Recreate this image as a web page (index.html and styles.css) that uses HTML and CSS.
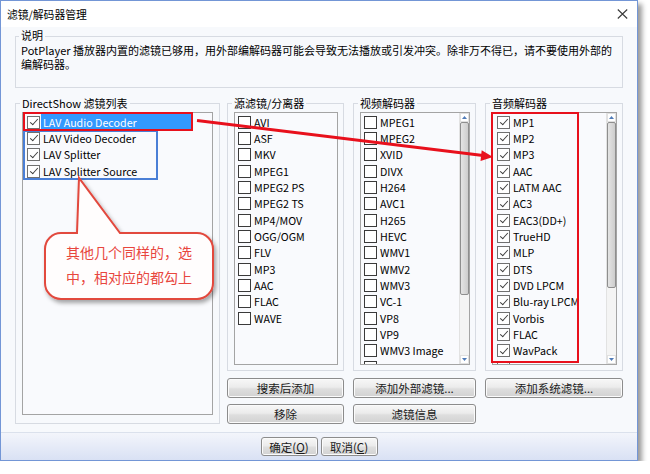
FILE: index.html
```html
<!DOCTYPE html>
<html lang="zh-CN">
<head>
<meta charset="utf-8">
<title>滤镜/解码器管理</title>
<link rel="stylesheet" href="styles.css">
</head>
<body>
<div class="window">
  <div class="titlebar">
    <span class="title">滤镜/解码器管理</span>
    <svg class="close" width="11" height="10" viewBox="0 0 11 10"><path d="M0.8 0.5 L10.2 9.5 M10.2 0.5 L0.8 9.5" stroke="#3a3a3a" stroke-width="1.1" fill="none"/></svg>
  </div>
  <div class="body">
    <div class="group desc">
      <div class="group-label">说明</div>
      <p class="desc-text">PotPlayer 播放器内置的滤镜已够用，用外部编解码器可能会导致无法播放或引发冲突。除非万不得已，请不要使用外部的<br>编解码器。</p>
    </div>
    <div class="main">
      <div class="group ds">
        <div class="group-label">DirectShow 滤镜列表</div>
        <div class="list">
          <div class="items">
            <div class="row"><span class="cb on"></span><span class="label sel">LAV Audio Decoder</span></div>
            <div class="row"><span class="cb on"></span><span class="label">LAV Video Decoder</span></div>
            <div class="row"><span class="cb on"></span><span class="label">LAV Splitter</span></div>
            <div class="row"><span class="cb on"></span><span class="label">LAV Splitter Source</span></div>
          </div>
        </div>
      </div>
      <div class="right">
        <div class="group col">
          <div class="group-label">源滤镜/分离器</div>
          <div class="list">
            <div class="items">
              <div class="row"><span class="cb"></span><span class="label">AVI</span></div>
              <div class="row"><span class="cb"></span><span class="label">ASF</span></div>
              <div class="row"><span class="cb"></span><span class="label">MKV</span></div>
              <div class="row"><span class="cb"></span><span class="label">MPEG1</span></div>
              <div class="row"><span class="cb"></span><span class="label">MPEG2 PS</span></div>
              <div class="row"><span class="cb"></span><span class="label">MPEG2 TS</span></div>
              <div class="row"><span class="cb"></span><span class="label">MP4/MOV</span></div>
              <div class="row"><span class="cb"></span><span class="label">OGG/OGM</span></div>
              <div class="row"><span class="cb"></span><span class="label">FLV</span></div>
              <div class="row"><span class="cb"></span><span class="label">MP3</span></div>
              <div class="row"><span class="cb"></span><span class="label">AAC</span></div>
              <div class="row"><span class="cb"></span><span class="label">FLAC</span></div>
              <div class="row"><span class="cb"></span><span class="label">WAVE</span></div>
            </div>
          </div>
        </div>
        <div class="group col">
          <div class="group-label">视频解码器</div>
          <div class="list">
            <div class="items">
              <div class="row"><span class="cb"></span><span class="label">MPEG1</span></div>
              <div class="row"><span class="cb"></span><span class="label">MPEG2</span></div>
              <div class="row"><span class="cb"></span><span class="label">XVID</span></div>
              <div class="row"><span class="cb"></span><span class="label">DIVX</span></div>
              <div class="row"><span class="cb"></span><span class="label">H264</span></div>
              <div class="row"><span class="cb"></span><span class="label">AVC1</span></div>
              <div class="row"><span class="cb"></span><span class="label">H265</span></div>
              <div class="row"><span class="cb"></span><span class="label">HEVC</span></div>
              <div class="row"><span class="cb"></span><span class="label">WMV1</span></div>
              <div class="row"><span class="cb"></span><span class="label">WMV2</span></div>
              <div class="row"><span class="cb"></span><span class="label">WMV3</span></div>
              <div class="row"><span class="cb"></span><span class="label">VC-1</span></div>
              <div class="row"><span class="cb"></span><span class="label">VP8</span></div>
              <div class="row"><span class="cb"></span><span class="label">VP9</span></div>
              <div class="row"><span class="cb"></span><span class="label">WMV3 Image</span></div>
              <div class="row"><span class="cb"></span><span class="label">VC-1 Image</span></div>
            </div>
            <div class="scroll">
              <div class="sb-btn"><svg width="5" height="3" viewBox="0 0 5 3"><path d="M0 3 L2.5 0 L5 3 Z" fill="#4f7bb8"/></svg></div>
              <div class="thumb video-thumb"></div>
              <div class="track"></div>
              <div class="sb-btn"><svg width="5" height="3" viewBox="0 0 5 3"><path d="M0 0 L2.5 3 L5 0 Z" fill="#4f7bb8"/></svg></div>
            </div>
          </div>
        </div>
        <div class="group col">
          <div class="group-label">音频解码器</div>
          <div class="list">
            <div class="items audio">
              <div class="row"><span class="cb on"></span><span class="label">MP1</span></div>
              <div class="row"><span class="cb on"></span><span class="label">MP2</span></div>
              <div class="row"><span class="cb on"></span><span class="label">MP3</span></div>
              <div class="row"><span class="cb on"></span><span class="label">AAC</span></div>
              <div class="row"><span class="cb on"></span><span class="label">LATM AAC</span></div>
              <div class="row"><span class="cb on"></span><span class="label">AC3</span></div>
              <div class="row"><span class="cb on"></span><span class="label">EAC3(DD+)</span></div>
              <div class="row"><span class="cb on"></span><span class="label">TrueHD</span></div>
              <div class="row"><span class="cb on"></span><span class="label">MLP</span></div>
              <div class="row"><span class="cb on"></span><span class="label">DTS</span></div>
              <div class="row"><span class="cb on"></span><span class="label">DVD LPCM</span></div>
              <div class="row"><span class="cb on"></span><span class="label">Blu-ray LPCM</span></div>
              <div class="row"><span class="cb on"></span><span class="label">Vorbis</span></div>
              <div class="row"><span class="cb on"></span><span class="label">FLAC</span></div>
              <div class="row"><span class="cb on"></span><span class="label">WavPack</span></div>
              <div class="row"><span class="cb on"></span><span class="label">TTA</span></div>
            </div>
            <div class="scroll">
              <div class="sb-btn"><svg width="5" height="3" viewBox="0 0 5 3"><path d="M0 3 L2.5 0 L5 3 Z" fill="#4f7bb8"/></svg></div>
              <div class="thumb audio-thumb"></div>
              <div class="track"></div>
              <div class="sb-btn"><svg width="5" height="3" viewBox="0 0 5 3"><path d="M0 0 L2.5 3 L5 0 Z" fill="#4f7bb8"/></svg></div>
            </div>
          </div>
        </div>
        <button class="btn">搜索后添加</button>
        <button class="btn">添加外部滤镜...</button>
        <button class="btn">添加系统滤镜...</button>
        <button class="btn">移除</button>
        <button class="btn">滤镜信息</button>
      </div>
    </div>
  </div>
  <div class="footer">
    <button class="btn fbtn">确定(<u>O</u>)</button>
    <button class="btn fbtn">取消(<u>C</u>)</button>
  </div>
  <svg class="annot" width="650" height="474" viewBox="0 0 650 474">
    <defs>
      <filter id="sh" x="-20%" y="-20%" width="150%" height="150%">
        <feDropShadow dx="2" dy="3" stdDeviation="2" flood-color="#000" flood-opacity="0.35"/>
      </filter>
    </defs>
    <rect x="24" y="131" width="133" height="48" fill="none" stroke="#4a7fd6" stroke-width="2"/>
    <rect x="24" y="113" width="168" height="17" fill="none" stroke="#e8101c" stroke-width="2"/>
    <rect x="492" y="113" width="86" height="249" fill="none" stroke="#e8101c" stroke-width="2"/>
    <line x1="197" y1="120.6" x2="483" y2="155.6" stroke="#e8101c" stroke-width="3"/>
    <polygon points="493,157 480.5,161 481.7,150.2" fill="#e8101c"/>
    <path filter="url(#sh)" d="M61 233 L77 233 L79 178 L120 233 L197 233 A16 16 0 0 1 213 249 L213 283 A16 16 0 0 1 197 299 L61 299 A16 16 0 0 1 45 283 L45 249 A16 16 0 0 1 61 233 Z" fill="#fffdfd" stroke="#e2483e" stroke-width="2"/>
    <text class="callout" x="66" y="258">其他几个同样的，选</text>
    <text class="callout" x="66" y="283">中，相对应的都勾上</text>
  </svg>
</div>
</body>
</html>
```

FILE: styles.css
```css
* { box-sizing: border-box; }
html, body { margin: 0; padding: 0; background: #fff; }
body {
  font-family: "Noto Sans CJK SC", "Noto Sans", sans-serif;
  font-size: 11px;
  color: #000;
}
.window {
  position: relative;
  width: 638px;
  height: 461px;
  border: 1px solid #7396d6;
  background: #f7f9fc;
  display: flex;
  flex-direction: column;
  box-shadow: 4px 4px 5px rgba(0, 0, 0, 0.4);
}
.titlebar {
  height: 26px;
  flex: none;
  background: #fff;
  display: flex;
  align-items: center;
  justify-content: space-between;
  padding: 0 9px 0 6px;
  font-size: 10.8px;
}
.body {
  flex: none;
  padding: 9px 14px 0;
}
.group {
  border: 1px solid #d7dbe2;
  display: flex;
  flex-direction: column;
}
.group-label {
  width: fit-content;
  margin: -6px 0 0 -2px;
  padding: 0 2px;
  line-height: 11px;
  background: #f7f9fc;
  white-space: nowrap;
}
.desc { padding: 0 5px 16px; }
.desc .group-label { margin-top: -7px; }
.desc-text {
  margin: 2px 0 0;
  line-height: 14px;
  white-space: nowrap;
}
.main {
  display: flex;
  gap: 7px;
  margin-top: 15px;
}
.ds {
  width: 205px;
  padding: 0 6px 8px;
}
.right {
  width: 396px;
  display: grid;
  grid-template-columns: 117px 123px 138px;
  grid-template-rows: 269px 20px 20px;
  column-gap: 9px;
  row-gap: 6px;
}
.col {
  height: 268px;
  padding: 0 5px 5px 6px;
}
.list {
  flex: 1;
  margin-top: 3px;
  border: 1px solid #a4a4a4;
  background: #f9fafd;
  display: flex;
  overflow: hidden;
  min-height: 0;
}
.items {
  flex: 1;
  padding: 1px 0 0 3px;
  overflow: hidden;
  font-size: 10.7px;
}
.ds .items { padding-left: 4px; }
.items.audio { padding-left: 4px; }
.row {
  height: 16.33px;
  display: flex;
  align-items: stretch;
  white-space: nowrap;
}
.cb {
  width: 13px;
  height: 13px;
  flex: none;
  align-self: center;
  border: 1px solid #3a3a3a;
  background: #fff;
  margin-right: 1px;
  display: flex;
  align-items: center;
  justify-content: center;
}
.cb.on { border-color: #707070; }
.cb.on::after {
  content: "";
  width: 3px;
  height: 7px;
  border: solid #3c3c3c;
  border-width: 0 1.4px 1.4px 0;
  transform: translateY(-1px) rotate(42deg);
}
.label {
  display: flex;
  align-items: center;
  padding: 0 2px;
}
.label.sel {
  width: 150px;
  background: #3399ff;
  color: #fff;
}
.scroll {
  width: 10px;
  flex: none;
  display: flex;
  flex-direction: column;
  background: #f2f2f2;
  border-left: 1px solid #e2e2e2;
}
.sb-btn {
  height: 9px;
  flex: none;
  background: #fff;
  border: 1px solid #e0e0e0;
  display: flex;
  align-items: center;
  justify-content: center;
}
.thumb {
  flex: none;
  border: 1px solid #8e8e8e;
  border-radius: 2px;
  background: linear-gradient(to right, #e4e4e4, #cdcdcd);
}
.video-thumb { height: 173px; }
.audio-thumb { height: 166px; }
.track { flex: 1; background: #f4f4f4; }
.btn {
  height: 20px;
  padding: 0;
  border: 1px solid #8c8c8c;
  border-radius: 3px;
  background: linear-gradient(#f7f7f7, #ececec 45%, #dedede 55%, #d2d2d2);
  box-shadow: inset 0 0 0 1px #fbfbfb;
  font: inherit;
  font-size: 11.5px;
  color: #1a1a1a;
  text-align: center;
}
.footer {
  margin-top: auto;
  height: 28px;
  flex: none;
  border-top: 1px solid #dbe1ec;
  background: linear-gradient(#f3f5fb, #d9e1f4);
  display: flex;
  justify-content: center;
  gap: 3px;
  padding-top: 4px;
}
.fbtn {
  width: 57px;
  height: 19px;
}
.annot {
  position: absolute;
  left: -1px;
  top: -1px;
  pointer-events: none;
}
.callout {
  font-family: "Noto Sans CJK SC", sans-serif;
  font-size: 14px;
  fill: #e8463d;
}
```
